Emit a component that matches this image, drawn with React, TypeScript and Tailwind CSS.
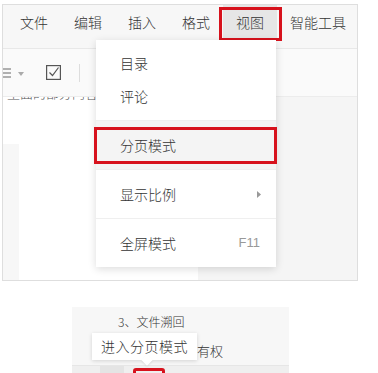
const RED = "border-[#d7121d]"

const MenuItem = ({ label, active }: { label: string; active?: boolean }) => (
  <div className={`h-[35px] px-[13px] shrink-0 whitespace-nowrap flex items-center ${active ? "bg-[#e6e6e6]" : ""}`}>{label}</div>
)

const App = () => {
  return (
    <div className="relative w-[378px] h-[373px] bg-white overflow-hidden font-['Noto_Sans_CJK_SC',sans-serif] font-light text-[#333]">
      {/* editor frame */}
      <div className="mt-[4px] ml-[2px] w-[356px] h-[277px] border border-[#dedede] flex flex-col">
        {/* menu bar */}
        <div className="h-[44px] shrink-0 bg-[#f7f7f7] border-b border-[#e8e8e8] flex pl-[4px] text-[14px] overflow-hidden">
          <MenuItem label="文件" />
          <MenuItem label="编辑" />
          <MenuItem label="插入" />
          <MenuItem label="格式" />
          <MenuItem label="视图" active />
          <MenuItem label="智能工具" />
        </div>
        {/* toolbar */}
        <div className="h-[47px] shrink-0 bg-[#fafafa] flex items-center overflow-hidden">
          <svg width="12" height="12" viewBox="0 0 12 12" className="-ml-[2px]">
            <path d="M0 2h10M0 6h10M0 10h10" stroke="#666" strokeWidth="1.2" />
          </svg>
          <svg width="6" height="4" viewBox="0 0 6 4" className="ml-[5px] mt-[2px]">
            <path d="M0 0h6L3 4z" fill="#aaa" />
          </svg>
          <svg width="15" height="15" viewBox="0 0 15 15" className="ml-[22px]">
            <rect x="0.6" y="0.6" width="13.8" height="13.8" fill="none" stroke="#555" strokeWidth="1.2" />
            <path d="M3.5 7.5l3 3 6-8" fill="none" stroke="#555" strokeWidth="1.2" />
          </svg>
          <div className="ml-[18px] w-px h-[18px] bg-[#dddddd]" />
        </div>
        {/* document area */}
        <div className="flex-1 flex bg-[#f5f5f5] border-t border-[#ececec]">
          <div className="w-[195px] bg-white flex flex-col">
            <div className="h-[47px] overflow-hidden">
              <div className="h-[5px] overflow-hidden text-[13px] text-[#555] leading-[18px] whitespace-nowrap">
                <div className="-mt-[13px] pl-[4px]">里面的部分内容（</div>
              </div>
            </div>
            <div className="flex-1 flex">
              <div className="w-[16px] bg-[#f7f7f7]" />
              <div className="flex-1 bg-white" />
            </div>
          </div>
        </div>
      </div>

      {/* 视图 highlight */}
      <div className={`absolute left-[219px] top-[7px] w-[63px] h-[34px] border-[3px] ${RED}`} />

      {/* dropdown menu */}
      <div className="absolute left-[96px] top-[40px] w-[180px] h-[227px] bg-white shadow-[0_2px_8px_rgba(0,0,0,0.14)] text-[14px] flex flex-col">
        <div className="pt-[7px] pb-[7px]">
          <div className="h-[33px] pl-[24px] flex items-center">目录</div>
          <div className="h-[33px] pl-[24px] flex items-center">评论</div>
        </div>
        <div className="h-px bg-[#efefef]" />
        <div className="h-[48px] pl-[24px] flex items-center bg-[#f4f4f4]">分页模式</div>
        <div className="h-px bg-[#efefef]" />
        <div className="h-[48px] pl-[24px] pr-[15px] flex items-center justify-between">
          <span>显示比例</span>
          <svg width="4" height="7" viewBox="0 0 4 7">
            <path d="M0 0l4 3.5L0 7z" fill="#999" />
          </svg>
        </div>
        <div className="h-px bg-[#efefef]" />
        <div className="h-[48px] pl-[24px] pr-[16px] flex items-center justify-between">
          <span>全屏模式</span>
          <span className="font-['Liberation_Sans',sans-serif] text-[13px] text-[#999]">F11</span>
        </div>
      </div>

      {/* 分页模式 highlight */}
      <div className={`absolute left-[94px] top-[127px] w-[183px] h-[37px] border-[3px] ${RED}`} />

      {/* lower screenshot */}
      <div className="mt-[26px] ml-[72px] w-[217px] h-[66px] bg-[#f7f7f7] flex flex-col">
        <div className="h-[30px] pl-[46px] flex items-center text-[12px]">3、文件溯回</div>
        <div className="h-[28px] pl-[125px] flex items-center text-[13px]">有权</div>
        <div className="flex-1 border-t border-[#e6e6e6] bg-[#efefef] flex">
          <div className="ml-[28px] w-[24px] bg-[#e4e4e4]" />
        </div>
      </div>

      {/* tooltip */}
      <div className="absolute left-[92px] top-[333px] w-[105px] h-[27px] bg-white shadow-[0_1px_4px_rgba(0,0,0,0.15)] flex items-center justify-center text-[14px] tracking-[0.5px]">
        进入分页模式
        <div className="absolute left-[51px] -bottom-[4px] w-[8px] h-[8px] bg-white rotate-45 shadow-[1px_1px_2px_rgba(0,0,0,0.08)]" />
      </div>

      {/* toolbar button highlight */}
      <div className={`absolute left-[133px] top-[368px] w-[32px] h-[12px] border-[3px] rounded-[3px] ${RED}`} />
    </div>
  )
}

export default App
